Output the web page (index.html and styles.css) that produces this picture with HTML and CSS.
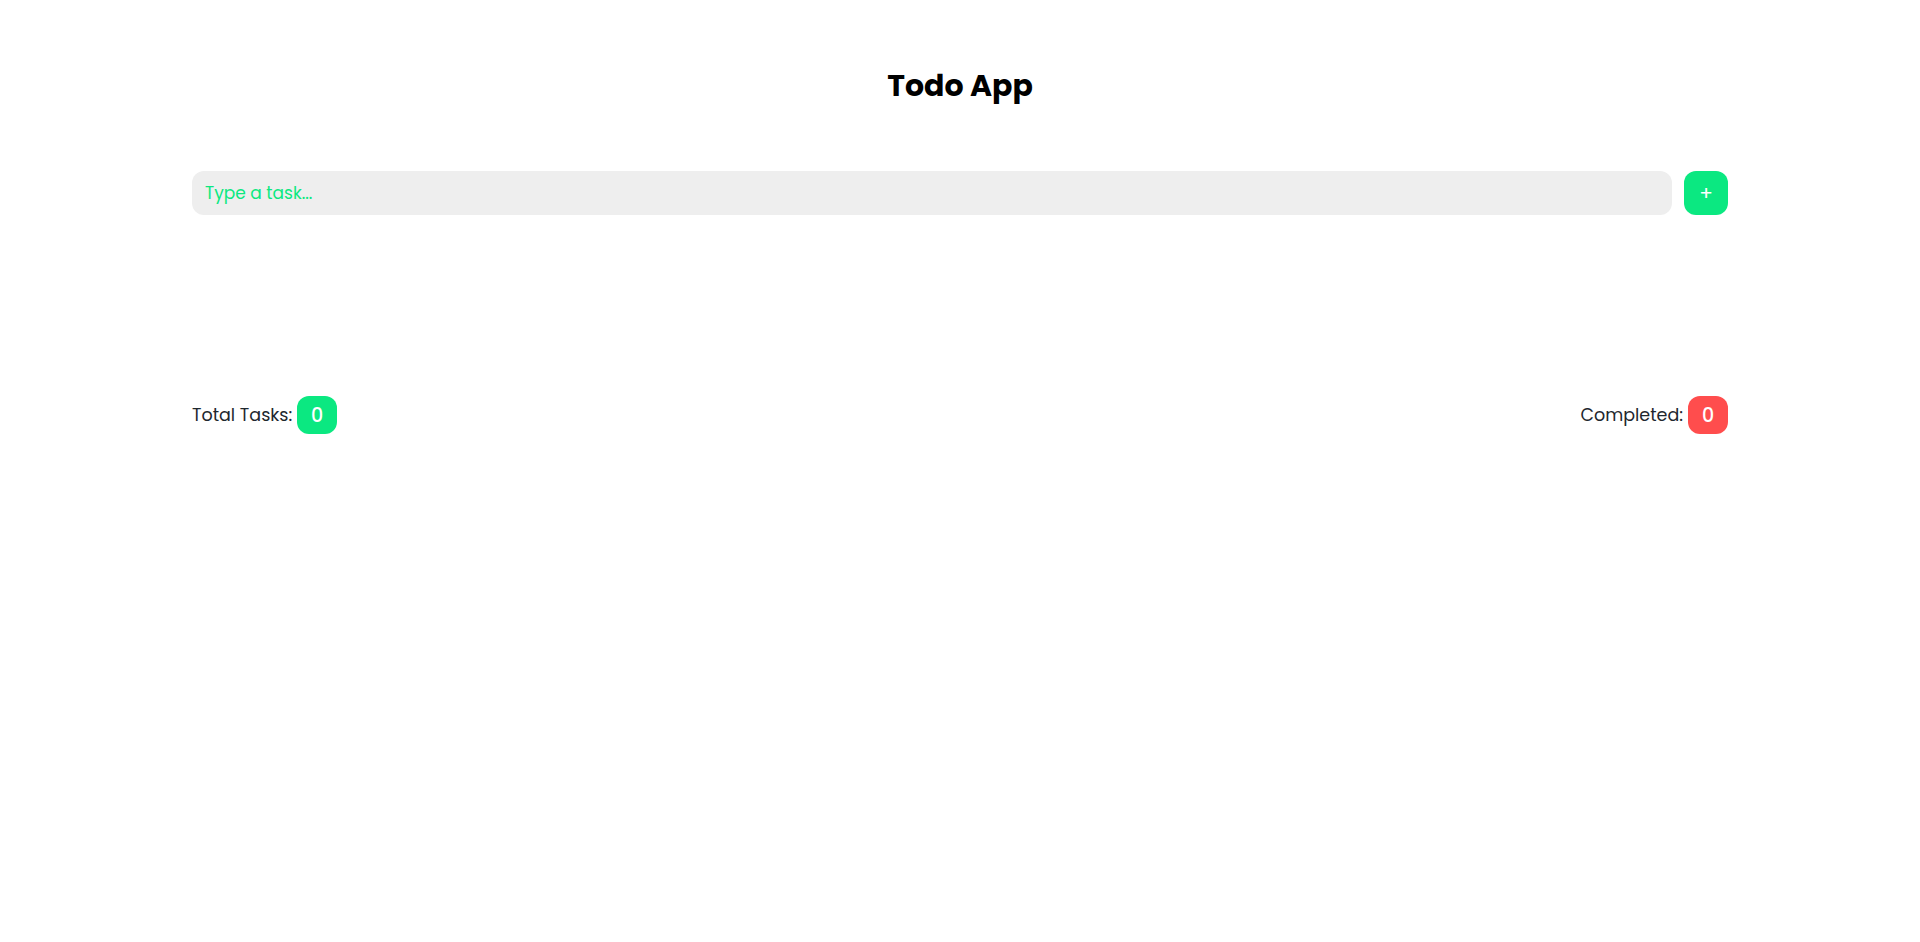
FILE: index.html
```html
<!DOCTYPE html>
<html lang="en">
<head>
<meta charset="UTF-8">
<title>Todo App</title>
<link rel="stylesheet" href="styles.css">
</head>
<body>
<div class="app">
  <h1 class="title">Todo App</h1>
  <form class="add-form">
    <input class="task-input" type="text" placeholder="Type a task...">
    <button class="add-btn" type="button">+</button>
  </form>
  <ul class="task-list"></ul>
  <div class="stats">
    <div class="stat">Total Tasks: <span class="badge badge-green">0</span></div>
    <div class="stat">Completed: <span class="badge badge-red">0</span></div>
  </div>
</div>
</body>
</html>
```
FILE: styles.css
```css
* { box-sizing: border-box; }
html, body { margin: 0; padding: 0; background: #fff; }
body { font-family: "Poppins", "Open Sans", sans-serif; color: #1e272e; }
.app { width: 80%; margin: 0 auto; }
.title {
  margin: 0;
  padding-top: 67px;
  text-align: center;
  font-size: 30px;
  font-weight: 700;
  color: #000;
  line-height: 38px;
}
.add-form { display: flex; gap: 12px; margin-top: 66px; }
.task-input {
  flex: 1;
  height: 44px;
  border: none;
  outline: none;
  background: #eeeeee;
  border-radius: 12px;
  padding: 0 13px;
  font-family: inherit;
  font-size: 17px;
  color: #0be881;
}
.task-input::placeholder { color: #0be881; opacity: 1; }
.add-btn {
  width: 44px;
  height: 44px;
  border: none;
  border-radius: 12px;
  background: #0be881;
  color: #fff;
  font-size: 20px;
  font-family: inherit;
  padding: 0;
}
.task-list { list-style: none; margin: 0; padding: 0; height: 181px; }
.stats { display: flex; justify-content: space-between; align-items: center; }
.stat { display: flex; align-items: center; gap: 5px; font-size: 17.5px; }
.badge {
  display: inline-flex;
  align-items: center;
  justify-content: center;
  width: 40px;
  height: 38px;
  border-radius: 12px;
  color: #fff;
  font-size: 19px;
  font-weight: 500;
}
.badge-green { background: #0be881; }
.badge-red { background: #ff4d4d; }
```
